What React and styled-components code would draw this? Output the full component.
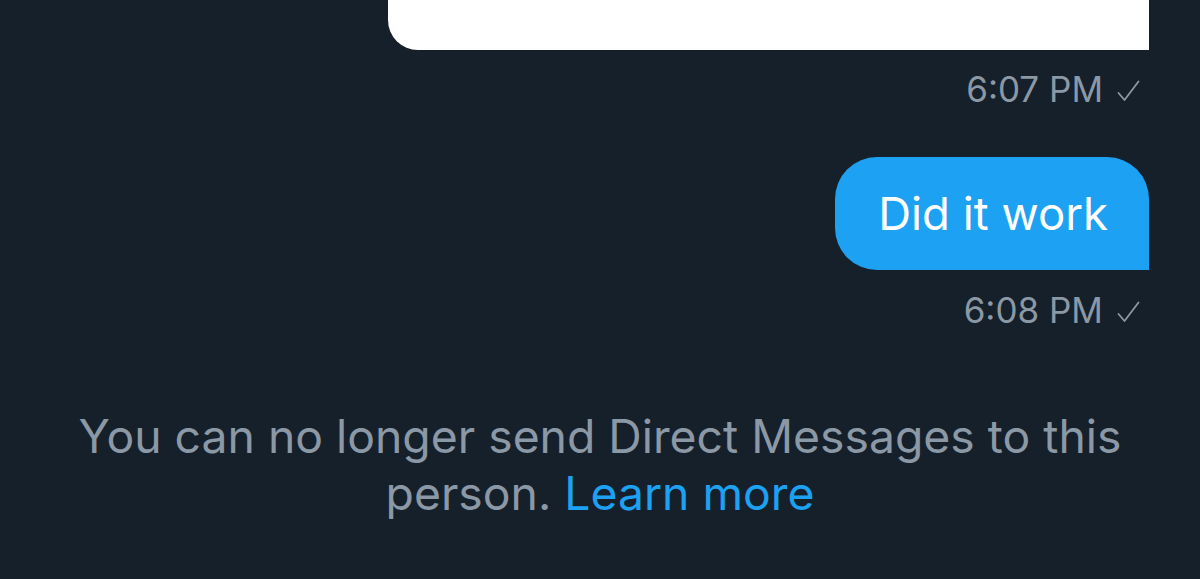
import React from "react";
import styled, { createGlobalStyle } from "styled-components";

const Global = createGlobalStyle`
  html, body { margin: 0; padding: 0; background: #16202b; }
  body { font-family: Inter, "Open Sans", "Liberation Sans", sans-serif; -webkit-font-smoothing: antialiased; }
`;

const Screen = styled.div`
  width: 1200px;
  height: 579px;
  overflow: hidden;
  background: #16202b;
  display: flex;
  flex-direction: column;
  box-sizing: border-box;
`;

const Thread = styled.div`
  display: flex;
  flex-direction: column;
  align-items: flex-end;
  padding-right: 51px;
`;

const MediaBubble = styled.div`
  width: 761px;
  height: 50px;
  background: #ffffff;
  border-radius: 0 0 0 30px;
`;

const TextBubble = styled.div`
  background: #1da1f2;
  color: #ffffff;
  font-size: 45.5px;
  line-height: 53px;
  padding: 30px 41px 30px 43px;
  border-radius: 42px 42px 0 42px;
  margin-top: ${(p) => p.$top}px;
`;

const Stamp = styled.div`
  display: flex;
  align-items: center;
  gap: 14px;
  color: #8b98a5;
  font-size: 35px;
  line-height: 40px;
  margin-top: ${(p) => p.$top}px;
  margin-right: 9px;
`;

const Check = styled.svg`
  width: 23px;
  height: 22px;
  margin-top: 3px;
`;

const Notice = styled.p`
  margin: 78px 0 0;
  padding: 0 40px;
  text-align: center;
  color: #8b98a5;
  font-size: 46.3px;
  line-height: 57px;
`;

const Link = styled.a`
  color: #1da1f2;
  text-decoration: none;
`;

const Tick = () => (
  <Check viewBox="0 0 23 22" fill="none" stroke="#8b98a5" strokeWidth="1.8" strokeLinecap="round" strokeLinejoin="round">
    <path d="M1.5 13 L7.5 20 L21.5 1.5" />
  </Check>
);

export default function App() {
  return (
    <Screen>
      <Global />
      <Thread>
        <MediaBubble />
        <Stamp $top={19}>
          6:07 PM <Tick />
        </Stamp>
        <TextBubble $top={48}>Did it work</TextBubble>
        <Stamp $top={20}>
          6:08 PM <Tick />
        </Stamp>
      </Thread>
      <Notice>
        <span>You can no longer send Direct Messages to this person.</span>{" "}
        <Link href="#">Learn more</Link>
      </Notice>
    </Screen>
  );
}
